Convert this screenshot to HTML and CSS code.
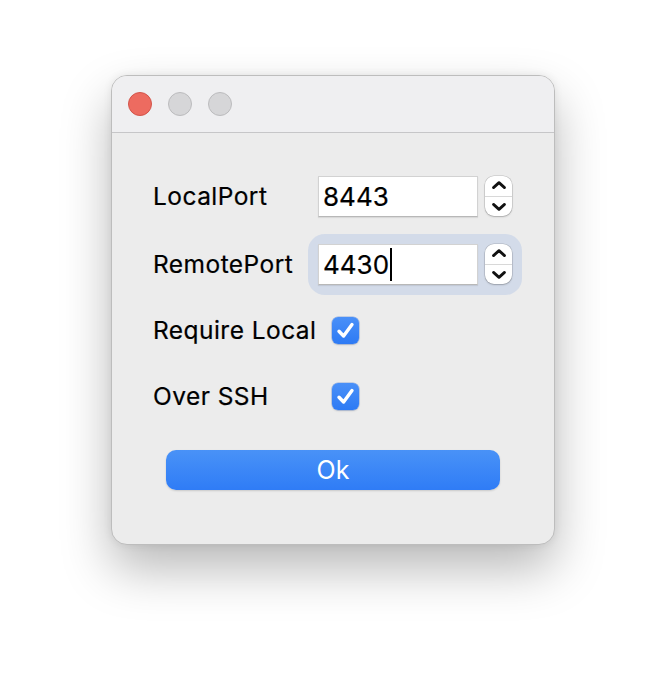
FILE: index.html
```html
<!DOCTYPE html>
<html>
<head>
<meta charset="utf-8">
<link rel="stylesheet" href="styles.css">
</head>
<body>
<div class="window">
  <div class="titlebar">
    <span class="light red"></span>
    <span class="light gray"></span>
    <span class="light gray"></span>
  </div>
  <div class="content">
    <div class="row">
      <span class="label field-label">LocalPort</span>
      <div class="spin">
        <div class="field">8443</div>
        <div class="stepper">
          <svg class="chev" width="16" height="10" viewBox="0 0 16 10"><path d="M2.5 7.6 L8 2.6 L13.5 7.6" fill="none" stroke="#111" stroke-width="2.8" stroke-linecap="round" stroke-linejoin="round"/></svg>
          <div class="divider"></div>
          <svg class="chev" width="16" height="10" viewBox="0 0 16 10"><path d="M2.5 2.4 L8 7.4 L13.5 2.4" fill="none" stroke="#111" stroke-width="2.8" stroke-linecap="round" stroke-linejoin="round"/></svg>
        </div>
      </div>
    </div>
    <div class="row row-focus">
      <span class="label field-label">RemotePort</span>
      <div class="spin focused">
        <div class="field">4430<span class="caret"></span></div>
        <div class="stepper">
          <svg class="chev" width="16" height="10" viewBox="0 0 16 10"><path d="M2.5 7.6 L8 2.6 L13.5 7.6" fill="none" stroke="#111" stroke-width="2.8" stroke-linecap="round" stroke-linejoin="round"/></svg>
          <div class="divider"></div>
          <svg class="chev" width="16" height="10" viewBox="0 0 16 10"><path d="M2.5 2.4 L8 7.4 L13.5 2.4" fill="none" stroke="#111" stroke-width="2.8" stroke-linecap="round" stroke-linejoin="round"/></svg>
        </div>
      </div>
    </div>
    <div class="row">
      <span class="label check-label">Require Local</span>
      <span class="check"><svg width="27" height="27" viewBox="0 0 27 27"><path d="M7 14.2 L11.6 19 L20 7.6" fill="none" stroke="#fff" stroke-width="3.4" stroke-linecap="round" stroke-linejoin="round"/></svg></span>
    </div>
    <div class="row">
      <span class="label check-label">Over SSH</span>
      <span class="check"><svg width="27" height="27" viewBox="0 0 27 27"><path d="M7 14.2 L11.6 19 L20 7.6" fill="none" stroke="#fff" stroke-width="3.4" stroke-linecap="round" stroke-linejoin="round"/></svg></span>
    </div>
    <div class="button-row">
      <button class="ok">Ok</button>
    </div>
  </div>
</div>
</body>
</html>
```
FILE: styles.css
```css
html, body {
  margin: 0;
  padding: 0;
  background: #ffffff;
}
body {
  font-family: "Inter", "Liberation Sans", sans-serif;
  padding: 75px 0 0 111px;
  height: 692px;
  box-sizing: border-box;
  overflow: hidden;
}
.window {
  width: 444px;
  height: 470px;
  box-sizing: border-box;
  background: #ececec;
  border-radius: 16px;
  border: 1px solid #bdbdbd;
  box-shadow: 0 24px 50px rgba(0, 0, 0, 0.28), 0 0 8px rgba(0, 0, 0, 0.08);
  overflow: hidden;
}
.titlebar {
  height: 56px;
  background: #efeff1;
  border-bottom: 1px solid #c6c6c8;
  display: flex;
  align-items: center;
  gap: 16px;
  padding-left: 16px;
  box-sizing: content-box;
}
.light {
  width: 24px;
  height: 24px;
  border-radius: 50%;
  box-sizing: border-box;
}
.light.red {
  background: #ed6b60;
  border: 1px solid #d3544a;
}
.light.gray {
  background: #d6d6d8;
  border: 1px solid #bcbcbe;
}
.content {
  padding: 39px 0 0 41px;
  display: flex;
  flex-direction: column;
  gap: 18px;
}
.row {
  height: 48px;
  display: flex;
  align-items: center;
}
.row-focus {
  margin-top: 2px;
}
.label {
  font-size: 24.5px;
  color: #000;
  letter-spacing: 0.45px;
  -webkit-text-stroke: 0.2px #000;
}
.field-label {
  width: 165px;
}
.check-label {
  width: 179px;
}
.spin {
  display: flex;
  align-items: center;
  gap: 7px;
  border-radius: 7px;
}
.spin.focused {
  background: #d3dbe9;
  box-shadow: 0 0 0 10px #d3dbe9;
}
.field {
  width: 160px;
  height: 41px;
  box-sizing: border-box;
  background: #fff;
  border: 1px solid #d2d2d2;
  border-bottom-color: #b8b8b8;
  box-shadow: 0 1px 1px rgba(0, 0, 0, 0.08);
  font-size: 26px;
  color: #000;
  padding-left: 4px;
  display: flex;
  align-items: center;
  -webkit-text-stroke: 0.2px #000;
}
.caret {
  display: inline-block;
  width: 2px;
  height: 33px;
  background: #000;
  margin-left: 1px;
}
.stepper {
  width: 27px;
  height: 40px;
  background: #fff;
  border-radius: 9px;
  box-shadow: 0 0 0 0.5px rgba(0, 0, 0, 0.18), 0 1px 2px rgba(0, 0, 0, 0.2);
  display: flex;
  flex-direction: column;
  align-items: center;
  justify-content: space-between;
  padding: 4px 0;
  box-sizing: border-box;
}
.divider {
  width: 100%;
  height: 1px;
  background: #d8d8d8;
}
.check {
  width: 27px;
  height: 27px;
  border-radius: 6px;
  background: linear-gradient(#4a90f8, #2d7af4);
  box-shadow: 0 0 0 0.5px rgba(30, 90, 200, 0.4), 0 1px 2px rgba(0, 0, 0, 0.15);
  display: flex;
}
.button-row {
  padding-top: 12px;
  padding-left: 13px;
}
.ok {
  width: 334px;
  height: 40px;
  border: none;
  border-radius: 10px;
  background: linear-gradient(#4992f7, #2f7cf6);
  box-shadow: 0 1px 2px rgba(0, 0, 0, 0.15);
  color: #fff;
  font-family: "Inter", "Liberation Sans", sans-serif;
  font-size: 25px;
  padding: 0;
}
```
